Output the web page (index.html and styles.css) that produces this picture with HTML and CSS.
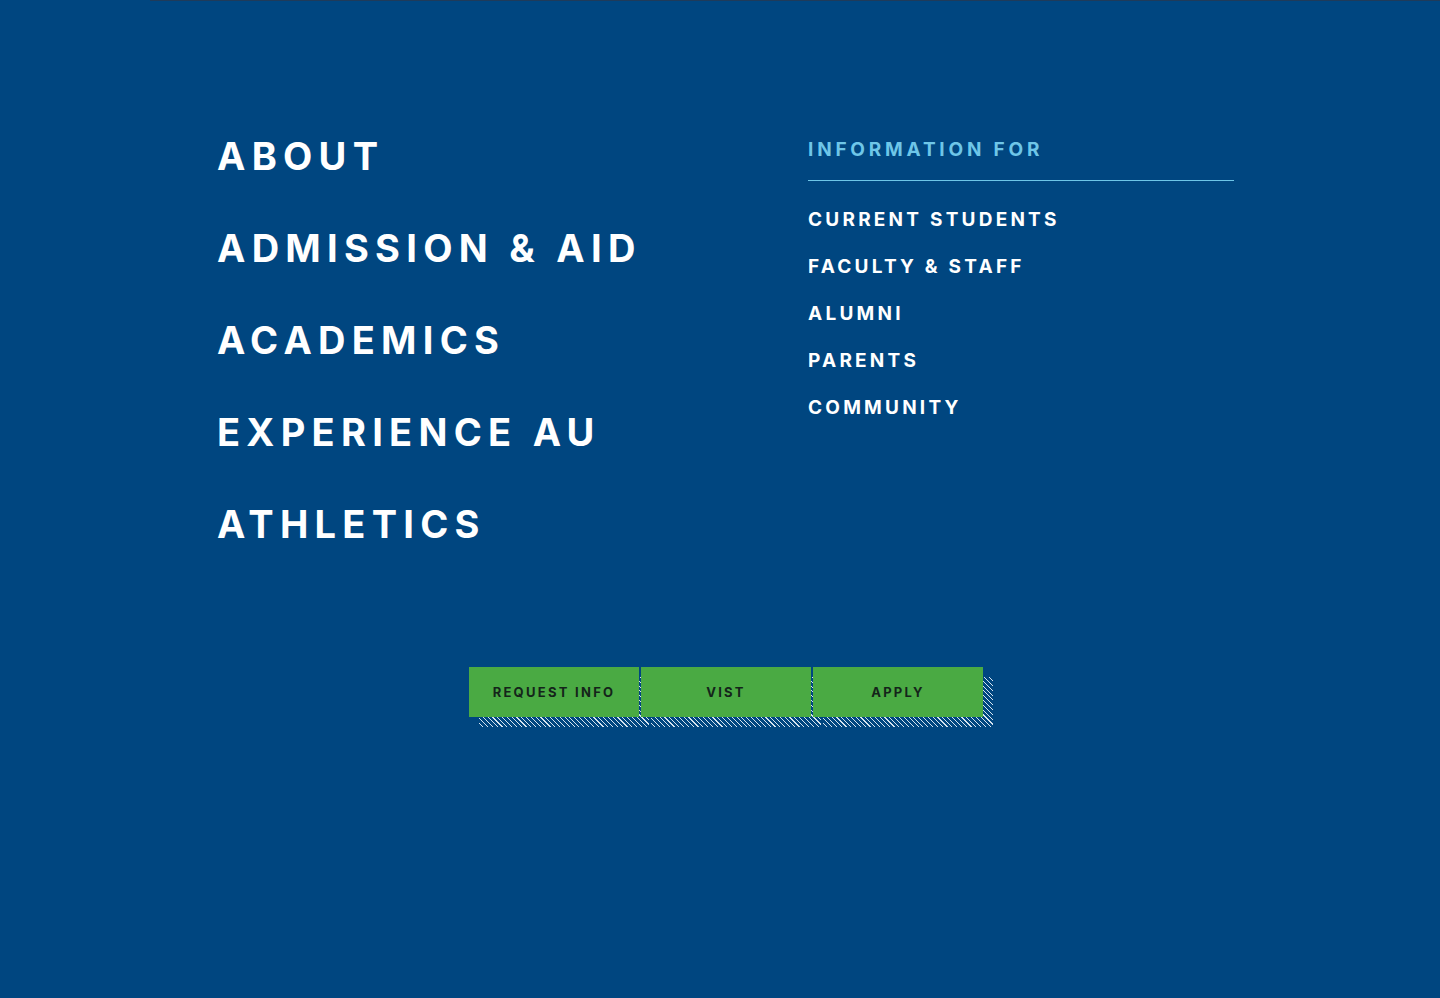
FILE: index.html
```html
<!DOCTYPE html>
<html lang="en">
<head>
<meta charset="utf-8">
<title>Menu</title>
<link rel="stylesheet" href="styles.css">
</head>
<body>
<div class="topline"></div>
<main class="menu">
  <div class="cols">
    <nav class="primary">
      <a href="#">ABOUT</a>
      <a href="#">ADMISSION &amp; AID</a>
      <a href="#">ACADEMICS</a>
      <a href="#">EXPERIENCE AU</a>
      <a href="#">ATHLETICS</a>
    </nav>
    <section class="info">
      <h2 class="info-title">INFORMATION FOR</h2>
      <ul class="info-list">
        <li><a href="#">CURRENT STUDENTS</a></li>
        <li><a href="#">FACULTY &amp; STAFF</a></li>
        <li><a href="#">ALUMNI</a></li>
        <li><a href="#">PARENTS</a></li>
        <li><a href="#">COMMUNITY</a></li>
      </ul>
    </section>
  </div>
  <div class="ctas">
    <a class="cta" href="#">REQUEST INFO</a>
    <a class="cta" href="#">VIST</a>
    <a class="cta" href="#">APPLY</a>
  </div>
</main>
</body>
</html>
```
FILE: styles.css
```css
* { box-sizing: border-box; }
html, body { margin: 0; padding: 0; }
body {
  background: #004680;
  font-family: Inter, "Open Sans", sans-serif;
  min-height: 998px;
  color: #fff;
}
.topline {
  height: 1px;
  margin-left: 150px;
  background: #1f3b5a;
}
.menu {
  padding: 0 0 0 217px;
}
.cols {
  display: grid;
  grid-template-columns: 591px 426px;
  padding-top: 109px;
}
.primary {
  display: flex;
  flex-direction: column;
}
.primary a {
  color: #fff;
  text-decoration: none;
  font-weight: 700;
  font-size: 38px;
  letter-spacing: 0.165em;
  line-height: 92px;
}
.info {
  padding-top: 28px;
}
.info-title {
  margin: 0;
  color: #6ec6e8;
  font-size: 19px;
  font-weight: 700;
  letter-spacing: 0.2em;
  line-height: 24px;
  padding-bottom: 18px;
  border-bottom: 1px solid #6ec6e8;
}
.info-list {
  list-style: none;
  margin: 0;
  padding: 15px 0 0;
}
.info-list li {
  font-size: 19px;
  line-height: 47px;
  height: 47px;
}
.info-list a {
  color: #fff;
  text-decoration: none;
  font-size: 19px;
  font-weight: 700;
  letter-spacing: 0.17em;
}
.ctas {
  position: relative;
  z-index: 0;
  display: flex;
  gap: 2px;
  margin-left: 252px;
  margin-top: 97px;
}
.cta {
  position: relative;
  width: 170px;
  height: 50px;
  display: flex;
  align-items: center;
  justify-content: center;
  background: #4aaa43;
  color: #14241a;
  text-decoration: none;
  font-size: 13px;
  font-weight: 700;
  letter-spacing: 0.175em;
}
.cta::before {
  content: "";
  position: absolute;
  left: 10px;
  top: 10px;
  width: 100%;
  height: 100%;
  z-index: -1;
  background: repeating-linear-gradient(45deg, #004680 0 2.6px, #d5e3ef 2.6px 3.4px);
}
```
